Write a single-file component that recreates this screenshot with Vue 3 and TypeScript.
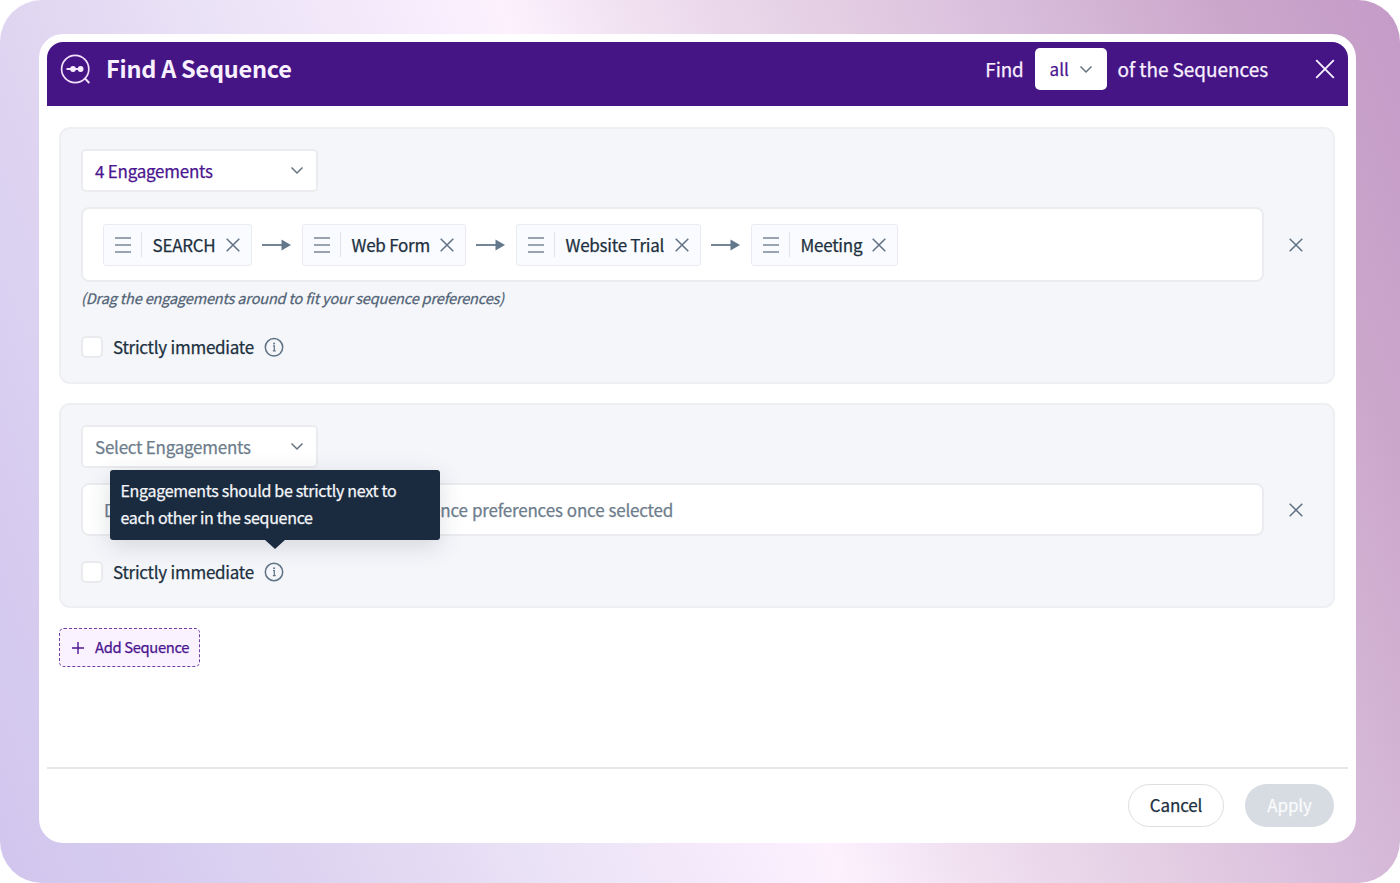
<script setup lang="ts">
import { ref } from 'vue'

interface Engagement {
  name: string
  w: number
}

const engagements: Engagement[] = [
  { name: 'SEARCH', w: 149 },
  { name: 'Web Form', w: 164 },
  { name: 'Website Trial', w: 185 },
  { name: 'Meeting', w: 147 },
]
const tip = ref('Engagements should be strictly next to each other in the sequence')
</script>

<template>
  <div class="stage">
    <div class="modal">
      <header class="head">
        <svg class="logo" width="32" height="32" viewBox="0 0 32 32" fill="none" stroke="#f3e0fb" stroke-width="1.7">
          <circle cx="15.2" cy="16" r="13.6" />
          <path d="M24.5 25L29.3 30" stroke-width="2" />
          <path d="M6.500 16H23" stroke-width="1.900" />
          <circle cx="13" cy="16" r="2.9" fill="#f8ecff" stroke="none" />
          <circle cx="20.6" cy="16" r="2.9" fill="#f8ecff" stroke="none" />
        </svg>
        <h1 class="title"><span>Find A Sequence</span></h1>
        <span class="find">Find</span>
        <div class="all">
          <span>all</span>
          <svg width="14" height="9" viewBox="0 0 14 9" class="chev"><path d="M1.5 1.5L7 7L12.500 1.500" /></svg>
        </div>
        <span class="of">of the Sequences</span>
        <svg class="close" width="20" height="20" viewBox="0 0 20 20"><path d="M1.200 1.200L18.800 18.800M18.800 1.200L1.200 18.800" /></svg>
      </header>

      <main class="body">
        <section class="card first">
          <div class="select chosen">
            <span>4 Engagements</span>
            <svg width="14" height="9" viewBox="0 0 14 9" class="chev"><path d="M1.500 1.500L7 7L12.500 1.500" /></svg>
          </div>
          <div class="row">
            <div class="box filled">
              <template v-for="(e, i) in engagements" :key="e.name">
                <svg v-if="i > 0" class="arrow" width="30" height="14" viewBox="0 0 30 14">
                  <path d="M0 7H21" stroke="#64788c" stroke-width="1.8" />
                  <path d="M19.500 1.500L29 7L19.500 12.500Z" fill="#64788c" />
                </svg>
                <div class="chip" :style="{ width: e.w + 'px' }">
                  <svg class="grip" width="16" height="16" viewBox="0 0 16 16"><path d="M0 1H16M0 8H16M0 15H16" /></svg>
                  <i class="bar"></i>
                  <span class="name">{{ e.name }}</span>
                  <svg class="x" width="14" height="14" viewBox="0 0 14 14"><path d="M.7 .7L13.300 13.300M13.300 .7L.7 13.300" /></svg>
                </div>
              </template>
            </div>
            <svg class="x remove" width="14" height="14" viewBox="0 0 14 14"><path d="M.7 .7L13.300 13.300M13.300 .7L.7 13.300" /></svg>
          </div>
          <p class="hint">(Drag the engagements around to fit your sequence preferences)</p>
          <div class="strict">
            <i class="check"></i>
            <span class="label">Strictly immediate</span>
            <span class="info">
              <svg width="20" height="20" viewBox="0 0 20 20" fill="none" stroke="#5f7285">
                <circle cx="10" cy="10.300" r="8.700" stroke-width="1.500" />
                <path d="M9 8.900H10.300V14M8.900 13.900H11.700" stroke-width="1.200" />
                <circle cx="10.100" cy="6.500" r=".95" fill="#5f7285" stroke="none" />
              </svg>
            </span>
          </div>
        </section>

        <section class="card second">
          <div class="select">
            <span>Select Engagements</span>
            <svg width="14" height="9" viewBox="0 0 14 9" class="chev"><path d="M1.500 1.500L7 7L12.500 1.500" /></svg>
          </div>
          <div class="row">
            <div class="box empty"><span>Drag engagements around to fit your sequence preferences once selected</span></div>
            <svg class="x remove" width="14" height="14" viewBox="0 0 14 14"><path d="M.7 .7L13.300 13.300M13.300 .7L.7 13.300" /></svg>
          </div>
          <div class="strict">
            <i class="check"></i>
            <span class="label">Strictly immediate</span>
            <span class="info">
              <svg width="20" height="20" viewBox="0 0 20 20" fill="none" stroke="#5f7285">
                <circle cx="10" cy="10" r="8.700" stroke-width="1.500" />
                <path d="M9 8.600H10.300V13.700M8.900 13.600H11.700" stroke-width="1.200" />
                <circle cx="10.100" cy="6.200" r=".95" fill="#5f7285" stroke="none" />
              </svg>
              <span class="tooltip">{{ tip }}</span>
            </span>
          </div>
        </section>

        <button class="add">
          <svg width="12" height="12" viewBox="0 0 12 12"><path d="M6 0V12M0 6H12" stroke="#4b1690" stroke-width="1.400" /></svg>
          <span>Add Sequence</span>
        </button>
      </main>

      <footer class="foot">
        <button class="btn cancel"><span>Cancel</span></button>
        <button class="btn apply"><span>Apply</span></button>
      </footer>
    </div>
  </div>
</template>

<style>
body { background: #fff; }
</style>

<style scoped>
* { box-sizing: border-box; }
.stage {
  width: 1400px;
  height: 883px;
  padding: 34px 44px 40px 39px;
  border-radius: 42px;
  background: linear-gradient(68.7deg, #d1c5ed 0%, #d8cef0 11.500%, #e2d8f2 22.600%, #eae2f6 31%, #f2e8fa 39%, #fdf1fe 48.400%, #f0e0f0 56%, #e4cfe4 66.500%, #d8bcdb 78%, #cba6cb 90%, #c49bc8 100%);
  font-family: "Noto Sans CJK SC", "Open Sans", sans-serif;
  font-size: 17px;
  letter-spacing: -.25px;
  -webkit-text-stroke: .25px currentColor;
  color: #203040;
  overflow: hidden;
}
.modal {
  height: 809px;
  width: 1317px;
  border-radius: 24px;
  background: #fff;
  padding: 8px 8px 0 8px;
  display: flex;
  flex-direction: column;
}
svg { flex: none; }
span, p, button { white-space: nowrap; }
.head > span, .title span, .all > span, .btn > span, .add > span { position: relative; top: -1px; }
.head {
  height: 64px;
  flex: none;
  border-radius: 16px 16px 0 0;
  background: #451586;
  color: #f8f0ff;
  display: flex;
  align-items: center;
  padding: 0 13px 10px 13px;
}
.title { margin: 0 auto 0 14px; font-size: 23.500px; font-weight: 700; line-height: 30px; letter-spacing: -.25px; -webkit-text-stroke: 0; }
.find { font-size: 18.800px; letter-spacing: -.1px; }
.all {
  width: 72px; height: 42px; margin: 0 11px; border-radius: 5px; background: #fff; letter-spacing: 0;
  color: #4b1690; font-size: 17px; display: flex; align-items: center; justify-content: space-between; padding: 0 14px 0 15px;
}
.of { font-size: 19px; margin-right: 47px; letter-spacing: -.06px; }
.close path { stroke: #f8f0ff; stroke-width: 1.900; fill: none; }
.chev path { stroke: #66727f; stroke-width: 1.500; fill: none; }
.body { flex: 1; padding: 21px 12px 0; display: flex; flex-direction: column; align-items: flex-start; }
.card { width: 1276px; border: 2px solid #eeeff2; border-radius: 11px; background: #f5f6fa; padding: 20px 20px 0; }
.first { height: 257px; }
.second { height: 205px; margin-top: 19px; }
.select {
  width: 237px; height: 43px; border: 2px solid #ebecef; border-radius: 5px; background: #fff;
  display: flex; align-items: center; justify-content: space-between; padding: 0 12px 0 12px; color: #6d7d8c;
}
.select > span, .label { position: relative; top: -.5px; }
.chosen { color: #4b1690; }
.row { display: flex; align-items: center; margin-top: 15px; }
.box { width: 1183px; border: 2px solid #ebecef; border-radius: 8px; background: #fff; display: flex; align-items: center; padding: 0 20px; flex: none; }
.filled { height: 75px; }
.empty { height: 53px; color: #6d7d8c; padding-left: 21px; letter-spacing: -.2px; word-spacing: .55px; }
.remove { margin-left: 25px; }
.chip { height: 42px; border: 1px solid #e8ebf2; border-radius: 3px; background: #fafbfe; display: flex; align-items: center; padding: 0 11px; flex: none; }
.grip path { stroke: #7b8896; stroke-width: 1.400; }
.bar { width: 1px; height: 25px; background: #dfe3ea; margin: 0 10.500px 0 10px; }
.x path { stroke: #5f7285; stroke-width: 1.500; }
.chip .x { margin-left: auto; }
.arrow { margin: 0 10px; flex: none; }
.hint { margin: 3px 0 0; font-size: 14.500px; line-height: 26px; font-style: italic; color: #506274; letter-spacing: -.16px; }
.strict { display: flex; align-items: center; height: 22px; margin-top: 25px; }
.check { width: 22px; height: 22px; border: 2px solid #e9eaee; border-radius: 5px; background: #fff; margin-right: 10px; }
.info { position: relative; margin-left: 10.500px; height: 20px; display: flex; }
.tooltip {
  position: absolute; left: -154px; bottom: 42px; width: 330px; height: 70px; padding: 7px 10px;
  border-radius: 3px; background: #1a2b3f; color: #f4f6fa; font-size: 16px; line-height: 27px; white-space: normal; letter-spacing: -.3px;
  box-shadow: 0 6px 24px rgba(40, 50, 70, .16);
}
.tooltip::after {
  content: ""; position: absolute; left: 154px; bottom: -9px; border: solid transparent; border-width: 10px 11px 0; border-top-color: #1a2b3f;
}
.add {
  margin-top: 20px; width: 141px; height: 39px; border: 1px dashed #7040a5; border-radius: 5px; background: #faf3ff;
  color: #4b1690; font: 14.800px "Noto Sans CJK SC", sans-serif; letter-spacing: -.36px; display: flex; align-items: center; gap: 11px; padding: 0 11px 0 12px;
}
.foot { height: 76px; margin-bottom: 0; flex: none; border-top: 2px solid #e6e7ea; display: flex; justify-content: flex-end; padding: 15px 14px 0 0; gap: 21px; }
.btn { height: 43px; border-radius: 22px; font: 17px "Noto Sans CJK SC", sans-serif; letter-spacing: -.15px; padding: 0; }
.cancel { width: 96px; border: 1px solid #dcdee2; background: #fff; color: #203040; }
.apply { width: 89px; border: 0; background: #d7dce2; color: #fafbfc; }
</style>
